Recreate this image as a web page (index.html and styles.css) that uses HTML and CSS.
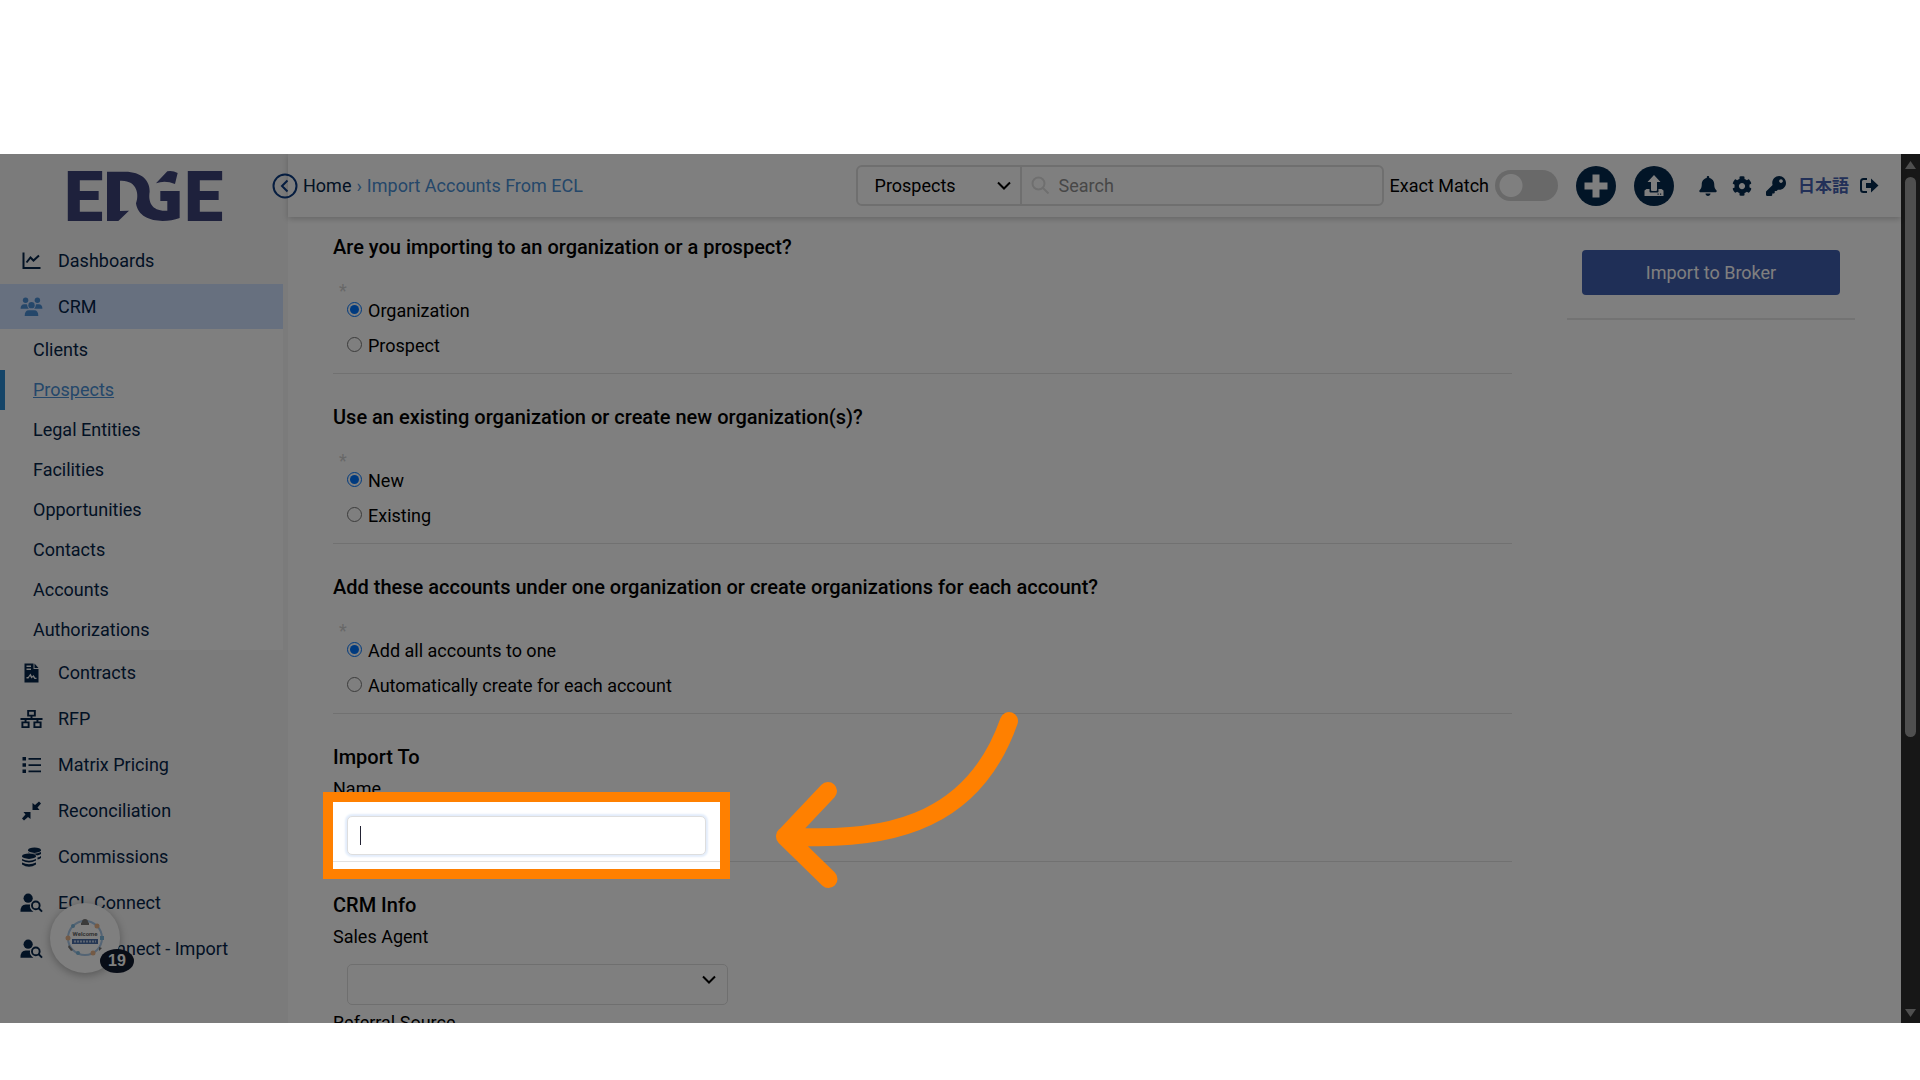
FILE: index.html
```html
<!DOCTYPE html>
<html lang="en">
<head>
<meta charset="utf-8">
<title>Import Accounts From ECL</title>
<link rel="stylesheet" href="styles.css">
</head>
<body>
<div class="app">
  <aside class="sidebar">
    <div class="logo">
      <svg viewBox="0 0 153 50" width="153" height="50" role="img" aria-label="Edge">
        <text class="logo-letter" x="-3" y="50">E</text>
        <path transform="translate(-17 -11) scale(.3333)" d="M171 35H225C275 35 300 62 299 95C294 125 305 152 345 152H352V123H331V93H389V174C340 192 265 185 258 130C268 105 262 62 215 62H210V153L237 152L205 183H171ZM318 70L352 34Q368 31 383 39L375 72Q345 60 318 70Z"/>
        <text class="logo-letter" x="117" y="50">E</text>
      </svg>
    </div>
    <nav>
      <ul class="menu">
        <li><a class="item" href="#"><svg class="icon" viewBox="0 0 20 20"><path class="line" d="M2 1.500V17H19M5 11.500L9 6.500L12 9.500L17.500 4.500"/></svg>Dashboards</a></li>
        <li>
          <a class="item item-open" href="#"><svg class="icon icon-wide" viewBox="0 0 24 22"><circle cx="5.500" cy="3.500" r="3"/><circle cx="18.500" cy="3.500" r="3"/><circle cx="12" cy="9" r="3.500"/><path d="M0 13Q0 8 4 8H6.500Q7.300 8 7.300 9Q7.500 11.500 9 13ZM24 13Q24 8 20 8H17.500Q16.700 8 16.700 9Q16.500 11.500 15 13ZM4.500 21Q4.500 14.500 9 14.500H15Q19.500 14.500 19.500 21Z"/></svg>CRM</a>
          <ul class="submenu">
            <li><a href="#">Clients</a></li>
            <li class="current"><a href="#">Prospects</a></li>
            <li><a href="#">Legal Entities</a></li>
            <li><a href="#">Facilities</a></li>
            <li><a href="#">Opportunities</a></li>
            <li><a href="#">Contacts</a></li>
            <li><a href="#">Accounts</a></li>
            <li><a href="#">Authorizations</a></li>
          </ul>
        </li>
        <li><a class="item" href="#"><svg class="icon" viewBox="0 0 20 20"><path fill-rule="evenodd" d="M3 .5H12V6H17V19.500H3ZM5 2.500V4H9.500V2.500ZM5 5.500V7H9.500V5.500ZM5 15.500H7L8.500 13L10 15.500L11.500 14L13 16H15V14.800H13.800L12 12L10.500 13.500L9 10.500L6.500 14H5ZM13 .5L17 5H13Z"/></svg>Contracts</a></li>
        <li><a class="item" href="#"><svg class="icon icon-wide" viewBox="0 0 24 20"><path class="line" d="M8.500 1.500H15.500V6.500H8.500ZM2.500 13.500H9V18.500H2.500ZM15 13.500H21.500V18.500H15ZM12 6.500V10M.5 10H23.500M5.800 10V13.500M18.200 10V13.500"/></svg>RFP</a></li>
        <li><a class="item" href="#"><svg class="icon" viewBox="0 0 20 20"><path d="M1 2H4.500V5.500H1ZM1 8.300H4.500V11.800H1ZM1 14.600H4.500V18H1ZM7 3H19.500V4.700H7ZM7 9.200H19.500V10.900H7ZM7 15.500H19.500V17.200H7Z"/></svg>Matrix Pricing</a></li>
        <li><a class="item" href="#"><svg class="icon" viewBox="0 0 20 20"><path d="M11 2L13.500 4L17.500 .5L19.500 2.500L16 6.500L18 9H11ZM9 18L6.500 16L2.500 19.500L.5 17.500L4 13.500L2 11H9Z"/></svg>Reconciliation</a></li>
        <li><a class="item" href="#"><svg class="icon" viewBox="0 0 20 20"><ellipse cx="13" cy="3.200" rx="6.500" ry="2.700"/><ellipse cx="7.500" cy="9.200" rx="7" ry="2.700"/><path d="M.5 12Q7.500 15.500 14.500 12V13.500Q7.500 17.500 .5 13.500ZM.5 15.500Q7.500 19 14.500 15.500V17.500Q7.500 22 .5 17.500ZM6.500 5.500Q13 8 19.500 5V7Q17.500 8.300 15.500 8.500Q13 6.500 6.500 6ZM16 10.500Q18 10 19.500 9V11Q18 12 16 12.500Z"/></svg>Commissions</a></li>
        <li><a class="item" href="#"><svg class="icon icon-wide" viewBox="0 0 24 20"><circle cx="8.500" cy="5" r="4.800"/><path d="M.5 19Q.5 11.500 6 11.500H10.500Q9.500 16 14 19Z"/><circle class="line" cx="16.500" cy="12.500" r="4"/><path class="line" d="M19.500 15.500L23 19"/></svg>ECL Connect</a></li>
        <li><a class="item" href="#"><svg class="icon icon-wide" viewBox="0 0 24 20"><circle cx="8.500" cy="5" r="4.800"/><path d="M.5 19Q.5 11.500 6 11.500H10.500Q9.500 16 14 19Z"/><circle class="line" cx="16.500" cy="12.500" r="4"/><path class="line" d="M19.500 15.500L23 19"/></svg>ECL Connect - Import</a></li>
      </ul>
    </nav>
    <button class="guide" type="button" aria-label="Guides">
      <svg viewBox="0 0 40 40" width="40" height="40">
        <circle class="ring" cx="20" cy="20" r="17"/>
        <g class="dot-orange"><circle cx="32" cy="8" r="2.500"/><circle cx="3" cy="20" r="2.500"/><circle cx="28" cy="35" r="2.500"/></g>
        <g class="dot-blue"><circle cx="8" cy="8" r="2"/><path d="M35 18H39V22H35Z"/><circle cx="13" cy="35" r="2"/></g>
        <path class="dot-dark" d="M17 4Q17 1 20 1T23 4L24 5V7H16V5ZM4 27L8 32L6 33L3 29ZM34 29L37 30L34 33Z"/>
        <text class="guide-word" x="20" y="18">Welcome</text>
        <path class="guide-bar" d="M7 21H33V26H7Z"/>
        <path class="guide-dash" d="M9 23.500H31"/>
      </svg>
      <span class="badge">19</span>
    </button>
  </aside>

  <div class="page">
    <header class="topbar">
      <nav class="crumbs">
        <a class="back" href="#" aria-label="Back"><svg viewBox="0 0 26 26" width="26" height="26"><circle cx="13" cy="13" r="11.500"/><path d="M15.500 7.500L10 13L15.500 18.500"/></svg></a>
        <a class="home" href="#">Home</a>
        <span class="trail">›</span>
        <a class="trail" href="#">Import Accounts From ECL</a>
      </nav>
      <div class="tools">
        <form class="search">
          <div class="scope">
            <select aria-label="Search in"><option>Prospects</option></select>
            <svg class="chevron" viewBox="0 0 14 9"><path d="M1 1.500L7 7.500L13 1.500"/></svg>
          </div>
          <svg class="glass" viewBox="0 0 19 19"><circle cx="7.500" cy="7.500" r="6"/><path d="M12 12L17.500 17.500"/></svg>
          <input type="text" placeholder="Search" aria-label="Search">
        </form>
        <label class="match">Exact Match<input type="checkbox"></label>
        <button class="round" type="button" aria-label="Add"><svg viewBox="0 0 40 40"><circle cx="20" cy="20" r="20"/><path class="cut" d="M16.500 8.500H23.500V16.500H31.500V23.500H23.500V31.500H16.500V23.500H8.500V16.500H16.500Z"/></svg></button>
        <button class="round" type="button" aria-label="Upload"><svg viewBox="0 0 40 40"><circle cx="20" cy="20" r="20"/><path class="cut" d="M20 9L26.500 16H23V24Q23 25 22 25H18Q17 25 17 24V16H13.500Z"/><path class="cut" fill-rule="evenodd" d="M10.500 24.500L12.500 23H15.500V25.500Q15.500 26.500 16.500 26.500H23.500Q24.500 26.500 24.500 25.500V23H27.500L29.500 24.500V30H10.500ZM23.500 27.500V28.700H24.700V27.500ZM26 27.500V28.700H27.200V27.500Z"/></svg></button>
        <div class="quick">
          <a href="#" aria-label="Notifications"><svg viewBox="0 0 448 512" width="18" height="20"><path d="M224 512c35.320 0 63.970-28.650 63.970-64H160.030c0 35.350 28.650 64 63.970 64zm215.390-149.710c-19.320-20.760-55.470-51.990-55.470-154.290 0-77.700-54.480-139.900-127.940-155.160V32c0-17.670-14.320-32-31.980-32s-31.980 14.330-31.980 32v20.840C118.560 68.100 64.080 130.300 64.080 208c0 102.300-36.150 133.530-55.470 154.290-6 6.450-8.660 14.160-8.610 21.710.11 16.400 12.980 32 32.100 32h383.800c19.120 0 32-15.600 32.100-32 .05-7.550-2.610-15.270-8.610-21.710z"/></svg></a>
          <a href="#" aria-label="Settings"><svg viewBox="0 0 512 512" width="20" height="20"><path d="M487.400 315.700l-42.600-24.600c4.300-23.200 4.300-47 0-70.200l42.600-24.600c4.900-2.800 7.100-8.600 5.500-14-11.100-35.600-30-67.800-54.700-94.600-3.800-4.100-10-5.100-14.800-2.300L380.800 110c-17.900-15.400-38.500-27.300-60.800-35.100V25.800c0-5.600-3.900-10.500-9.400-11.700-36.700-8.200-74.300-7.800-109.200 0-5.500 1.200-9.400 6.100-9.400 11.700V75c-22.200 7.900-42.800 19.800-60.800 35.100L88.700 85.500c-4.900-2.800-11-1.900-14.800 2.300-24.700 26.700-43.600 58.900-54.700 94.600-1.700 5.400.6 11.200 5.500 14L67.300 221c-4.300 23.200-4.300 47 0 70.200l-42.600 24.600c-4.900 2.800-7.100 8.600-5.500 14 11.100 35.600 30 67.800 54.700 94.600 3.800 4.100 10 5.100 14.800 2.300l42.600-24.600c17.900 15.400 38.500 27.300 60.800 35.100v49.200c0 5.600 3.900 10.500 9.400 11.700 36.700 8.200 74.300 7.800 109.200 0 5.500-1.200 9.400-6.100 9.400-11.700v-49.200c22.200-7.900 42.800-19.800 60.800-35.100l42.600 24.600c4.900 2.800 11 1.900 14.800-2.300 24.700-26.700 43.600-58.900 54.700-94.600 1.500-5.500-.7-11.300-5.600-14.100zM256 336c-44.100 0-80-35.900-80-80s35.900-80 80-80 80 35.900 80 80-35.900 80-80 80z"/></svg></a>
          <a href="#" aria-label="Access"><svg viewBox="0 0 512 512" width="20" height="20"><path d="M512 176C512 273.200 433.200 352 336 352c-11.200 0-22.200-1-32.800-3l-24 27A24 24 0 0 1 261.200 384H224v40c0 13.300-10.700 24-24 24h-40v40c0 13.300-10.700 24-24 24H24c-13.300 0-24-10.700-24-24v-78c0-6.400 2.500-12.500 7-17l161.800-161.800C163.100 213.800 160 195.300 160 176 160 78.800 238.800 0 336 0S512 78.500 512 176zM336 128c0 26.500 21.500 48 48 48s48-21.500 48-48-21.500-48-48-48-48 21.500-48 48z"/></svg></a>
          <a class="lang" href="#" lang="ja">日本語</a>
          <a class="logout" href="#" aria-label="Sign out"><svg viewBox="0 0 20 18" width="20" height="18"><path class="line" d="M8 2H4.500Q2 2 2 4.500V12.500Q2 15 4.500 15H8"/><path d="M7 6H12V1.500L19.500 8.500L12 15.500V11H7Z"/></svg></a>
        </div>
      </div>
    </header>

    <div class="content">
      <form class="import-form">
        <fieldset class="section">
          <legend>Are you importing to an organization or a prospect?</legend>
          <div class="required">*</div>
          <label class="option"><input type="radio" name="target" checked>Organization</label>
          <label class="option"><input type="radio" name="target">Prospect</label>
        </fieldset>
        <fieldset class="section">
          <legend>Use an existing organization or create new organization(s)?</legend>
          <div class="required">*</div>
          <label class="option"><input type="radio" name="source" checked>New</label>
          <label class="option"><input type="radio" name="source">Existing</label>
        </fieldset>
        <fieldset class="section">
          <legend>Add these accounts under one organization or create organizations for each account?</legend>
          <div class="required">*</div>
          <label class="option"><input type="radio" name="grouping" checked>Add all accounts to one</label>
          <label class="option"><input type="radio" name="grouping">Automatically create for each account</label>
        </fieldset>
        <fieldset class="section section-name">
          <legend>Import To</legend>
          <label class="caption" for="name">Name</label>
          <div class="field">
            <input class="textbox" id="name" type="text">
            <span class="caret"></span>
            <div class="spotlight"></div>
            <svg class="arrow" viewBox="0 0 320 220" width="320" height="220"><path d="M269 31C236 125 160 154 45 146M88 101L45 146.500L88.500 189"/></svg>
          </div>
        </fieldset>
        <fieldset class="section">
          <legend>CRM Info</legend>
          <label class="caption" for="agent">Sales Agent</label>
          <div class="field">
            <select class="picker" id="agent"><option></option></select>
            <svg class="chevron picker-chevron" viewBox="0 0 14 9"><path d="M1 1.500L7 7.500L13 1.500"/></svg>
          </div>
          <label class="caption" for="referral">Referral Source</label>
          <div class="field"><select class="picker" id="referral"><option></option></select></div>
        </fieldset>
      </form>
      <aside class="actions">
        <button class="primary" type="button">Import to Broker</button>
      </aside>
    </div>
  </div>

  <div class="scrollbar">
    <svg viewBox="0 0 13 10" width="13" height="10"><path d="M6.500 1L12 9H1Z"/></svg>
    <div class="track"><div class="thumb"></div></div>
    <svg viewBox="0 0 13 10" width="13" height="10"><path d="M6.500 9L12 1H1Z"/></svg>
  </div>
</div>
</body>
</html>
```
FILE: styles.css
```css
* { box-sizing: border-box; }

body {
  margin: 0;
  height: 100vh;
  padding: 154px 0 57px;
  background: #fff;
  color: #000;
  font: 18px/24px Roboto, "Noto Sans CJK JP", sans-serif;
}

a { color: inherit; text-decoration: none; }
button, input, select { font: inherit; color: inherit; }
button { border: 0; padding: 0; background: none; }
ul { list-style: none; margin: 0; padding: 0; }

.app {
  position: relative;
  display: flex;
  height: 100%;
  overflow: hidden;
  background: #fff;
}

/* Sidebar */
.sidebar {
  position: relative;
  flex: none;
  width: 288px;
  padding-right: 5px;
  background: #f6f6f6;
  color: #052449;
}
.logo { height: 84px; padding: 17px 0 0 67px; }
.logo svg { display: block; overflow: visible; fill: #3c4278; }
.logo-letter { font: 900 70px Roboto, sans-serif; }
.item {
  display: flex;
  align-items: center;
  gap: 15px;
  height: 46px;
  padding-left: 20px;
}
.icon { flex: none; width: 23px; height: 20px; fill: currentColor; }
.line { fill: none; stroke: currentColor; stroke-width: 2; }
.item-open { height: 45px; background: #cfe0ff; }
.item-open .icon { color: #4a8fd4; }
.submenu { background: #fff; padding-top: 1px; }
.submenu li {
  display: flex;
  align-items: center;
  height: 40px;
  padding-left: 33px;
}
.submenu .current { border-left: 5px solid #2a8ad0; padding-left: 28px; }
.current a { color: #4a8fd4; text-decoration: underline; }

.guide {
  position: absolute;
  left: 50px;
  bottom: 50px;
  display: grid;
  place-items: center;
  width: 70px;
  height: 70px;
  border-radius: 50%;
  background: #fff;
  box-shadow: 0 2px 8px rgba(0, 0, 0, .3);
}
.ring { fill: none; stroke: #a9c8e8; stroke-width: 2; }
.dot-orange { fill: #e8b48a; }
.dot-blue { fill: #7fb8dc; }
.dot-dark { fill: #777; }
.guide-word { font: 700 6px Roboto, sans-serif; text-anchor: middle; fill: #666; }
.guide-bar { fill: #4a6ea8; }
.guide-dash { stroke: #b9cae4; stroke-width: 2; stroke-dasharray: 2 1; }
.badge {
  position: absolute;
  right: -14px;
  bottom: 0;
  width: 34px;
  height: 24px;
  border-radius: 50%;
  background: #111a2e;
  color: #fff;
  font: 700 16px/24px "Liberation Sans", sans-serif;
  text-align: center;
}

/* Top bar */
.page { flex: 1; min-width: 0; }
.topbar {
  position: relative;
  display: flex;
  align-items: center;
  justify-content: space-between;
  height: 63px;
  padding-right: 22px;
  background: #fff;
  box-shadow: 0 2px 6px rgba(0, 0, 0, .2);
}
.crumbs { display: flex; align-items: center; gap: 5px; margin-left: -16px; }
.back svg { display: block; fill: none; stroke: #0b3a80; stroke-width: 2; }
.home { color: #052449; }
.trail { color: #4a8fd4; }
.tools { display: flex; align-items: center; gap: 18px; }
.search {
  display: flex;
  align-items: center;
  width: 528px;
  height: 41px;
  margin-right: -12px;
  border: 2px solid #dedede;
  border-radius: 6px;
}
.scope {
  position: relative;
  width: 164px;
  height: 100%;
  border-right: 2px solid #dedede;
}
.scope select {
  appearance: none;
  width: 100%;
  height: 100%;
  padding: 0 17px;
  border: 0;
  background: none;
}
.chevron {
  position: absolute;
  right: 9px;
  top: 14px;
  width: 14px;
  height: 9px;
  fill: none;
  stroke: #000;
  stroke-width: 2;
  pointer-events: none;
}
.glass { width: 19px; height: 19px; margin: 0 9px; fill: none; stroke: #dedede; stroke-width: 2; }
.search input { flex: 1; min-width: 0; padding: 0; border: 0; background: none; outline: 0; }
.search input::placeholder { color: #8f8f8f; }
.match { display: flex; align-items: center; gap: 6px; }
.match input {
  appearance: none;
  width: 63px;
  height: 31px;
  margin: 0;
  border-radius: 16px;
  background: radial-gradient(circle at 16px, #fff 11px, #d2d2d2 12px);
}
.round svg { display: block; width: 40px; height: 40px; fill: #042a4f; }
.round .cut { fill: #fff; }
.quick { display: flex; align-items: center; gap: 10px; color: #042a4f; padding-left: 4px; }
.quick a { display: grid; place-items: center; width: 24px; }
.quick svg { fill: currentColor; }
.quick .line { fill: none; }
.quick .lang { width: auto; color: #4560b0; font-size: 17px; font-weight: 700; }
.quick .logout { width: 20px; }

/* Form */
.content {
  display: grid;
  grid-template-columns: minmax(0, 1fr) 288px;
  align-items: start;
  column-gap: 55px;
  padding: 0 46px 0 45px;
}
.section {
  min-width: 0;
  margin: 0;
  padding: 29px 0 10px;
  border: 0;
  border-bottom: 1px solid #e2e2e2;
}
.section:first-child { padding-top: 16px; }
.section-name { padding-bottom: 6px; }
legend {
  float: left;
  width: 100%;
  padding: 0;
  font-size: 20px;
  line-height: 28px;
  font-weight: 500;
}
.required {
  clear: both;
  height: 32px;
  padding: 20px 0 0 6px;
  color: #d0d0d0;
  line-height: 20px;
}
.option { display: flex; align-items: center; gap: 6px; height: 35px; padding-left: 14px; }
.option input { width: 15px; height: 15px; margin: 0 0 3px; accent-color: #0075ff; }
.caption { display: block; clear: both; line-height: 36px; }
.field { position: relative; padding-top: 9px; }
.textbox, .picker {
  display: block;
  margin-left: 14px;
  border: 1px solid #dedede;
  border-radius: 5px;
  background: #fff;
}
.textbox {
  width: 359px;
  height: 39px;
  padding: 0 12px;
  outline: 0;
  box-shadow: 0 0 2px 2px #e3edfb;
}
.picker { appearance: none; width: 381px; height: 41px; }
.picker-chevron { left: 369px; top: 20px; }
.caret { position: absolute; left: 27px; top: 19px; width: 1px; height: 19px; background: #223; }

/* Walkthrough highlight: dims everything around the name box */
.spotlight {
  position: absolute;
  z-index: 10;
  left: -10px;
  top: -15px;
  width: 407px;
  height: 87px;
  border: 10px solid #ff8000;
  box-shadow: 0 0 0 2000px rgba(0, 0, 0, .5);
  pointer-events: none;
}
.arrow {
  position: absolute;
  z-index: 11;
  left: 407px;
  top: -117px;
  fill: none;
  stroke: #ff8000;
  stroke-width: 18;
  stroke-linecap: round;
  stroke-linejoin: round;
  pointer-events: none;
}

.actions { padding: 33px 15px 23px; border-bottom: 2px solid #e6e6e6; }
.primary {
  width: 100%;
  height: 45px;
  border-radius: 4px;
  background: #3e5eae;
  color: #fff;
}

.scrollbar {
  flex: none;
  display: flex;
  flex-direction: column;
  align-items: center;
  gap: 7px;
  width: 19px;
  padding: 6px 0 5px;
  background: #2e2e2e;
}
.scrollbar svg { flex: none; fill: #9e9e9e; }
.track { flex: 1; width: 11px; }
.thumb { height: 68%; border-radius: 6px; background: #9e9e9e; }
```
